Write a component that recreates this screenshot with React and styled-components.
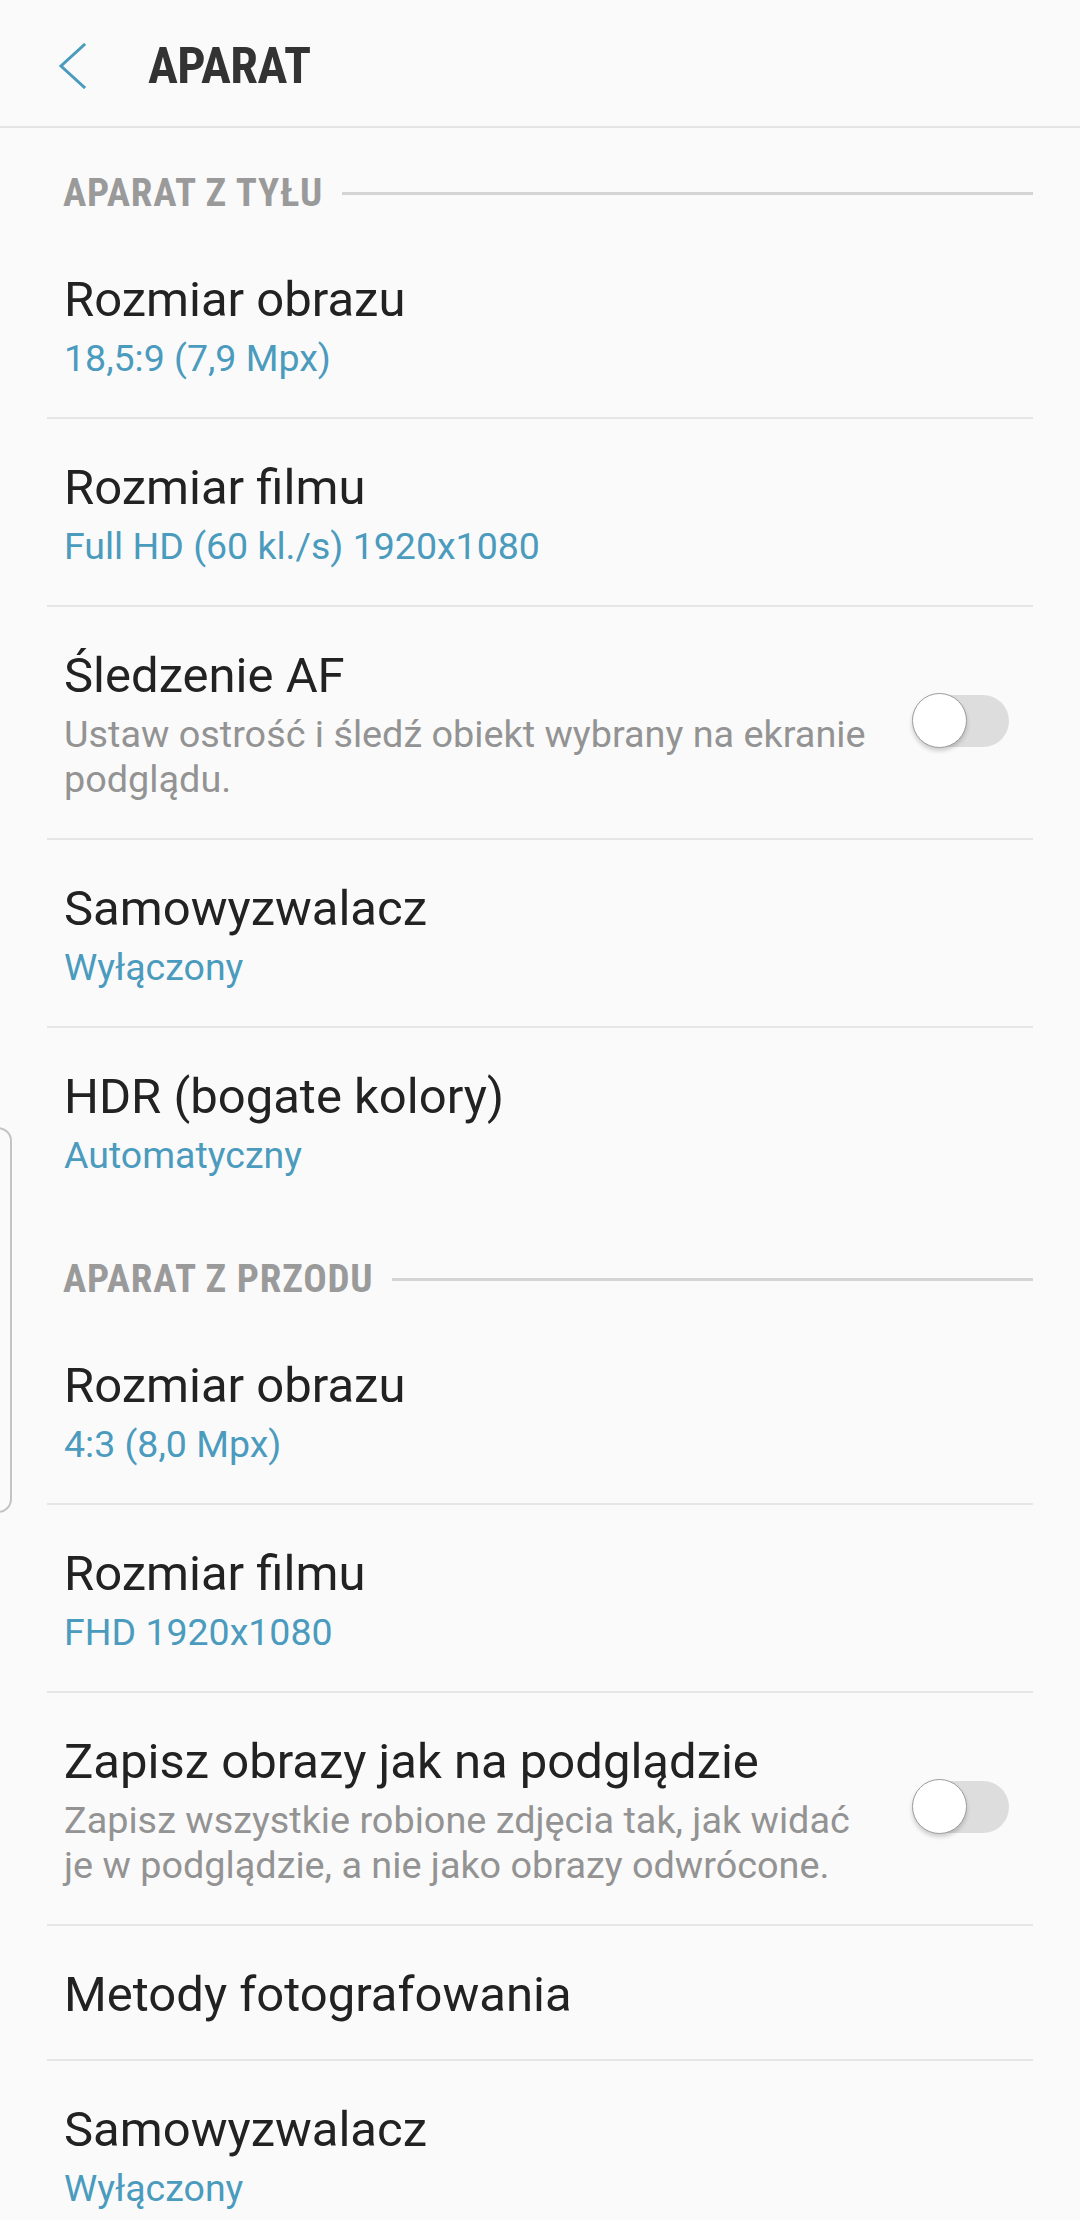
import styled, { createGlobalStyle } from "styled-components";

const GlobalStyle = createGlobalStyle`
  * { box-sizing: border-box; }
  html, body {
    margin: 0;
    padding: 0;
    overflow: hidden;
    background: #fafafa;
  }
  body {
    font-family: Roboto, "Noto Sans", sans-serif;
  }
`;

const condensed = `"Roboto Condensed", "DejaVu Sans Condensed", "Liberation Sans Narrow", Roboto, sans-serif`;

const sections = [
  {
    title: "APARAT Z TYŁU",
    items: [
      { title: "Rozmiar obrazu", value: "18,5:9 (7,9 Mpx)" },
      { title: "Rozmiar filmu", value: "Full HD (60 kl./s) 1920x1080" },
      {
        title: "Śledzenie AF",
        description: "Ustaw ostrość i śledź obiekt wybrany na ekranie podglądu.",
        toggle: true
      },
      { title: "Samowyzwalacz", value: "Wyłączony" },
      { title: "HDR (bogate kolory)", value: "Automatyczny" }
    ]
  },
  {
    title: "APARAT Z PRZODU",
    items: [
      { title: "Rozmiar obrazu", value: "4:3 (8,0 Mpx)" },
      { title: "Rozmiar filmu", value: "FHD 1920x1080" },
      {
        title: "Zapisz obrazy jak na podglądzie",
        description:
          "Zapisz wszystkie robione zdjęcia tak, jak widać je w podglądzie, a nie jako obrazy odwrócone.",
        toggle: true
      },
      { title: "Metody fotografowania" },
      { title: "Samowyzwalacz", value: "Wyłączony" }
    ]
  }
];

const BackIcon = () => (
  <svg width="30" height="46" viewBox="0 0 30 46" fill="none">
    <path d="M27 2 L4 23 L27 44" stroke="#4a9bbd" strokeWidth="3" strokeLinecap="square" />
  </svg>
);

const Switch = () => (
  <SwitchFrame>
    <SwitchTrack />
    <SwitchThumb />
  </SwitchFrame>
);

const SettingRow = ({ title, value, description, toggle }) => (
  <Row>
    <RowText>
      <RowTitle>{title}</RowTitle>
      {value && <RowValue>{value}</RowValue>}
      {description && <RowDescription>{description}</RowDescription>}
    </RowText>
    {toggle && <Switch />}
  </Row>
);

const App = () => {
  return (
    <Page>
      <GlobalStyle />
      <Header>
        <BackButton>
          <BackIcon />
        </BackButton>
        <HeaderTitle>APARAT</HeaderTitle>
      </Header>
      {sections.map((section) => (
        <section key={section.title}>
          <SectionHeader>
            <SectionTitle>{section.title}</SectionTitle>
            <SectionLine />
          </SectionHeader>
          <List>
            {section.items.map((item, i) => (
              <SettingRow key={i} {...item} />
            ))}
          </List>
        </section>
      ))}
      <EdgeHandle />
    </Page>
  );
};

const Page = styled.div`
  position: relative;
  width: 1080px;
  height: 2220px;
  overflow: hidden;
  background: #fafafa;
`;

const Header = styled.header`
  height: 128px;
  display: flex;
  align-items: center;
  padding-top: 6px;
  border-bottom: 2px solid #e4e4e4;
`;

const BackButton = styled.div`
  width: 30px;
  height: 46px;
  margin-left: 57px;
  display: flex;
`;

const HeaderTitle = styled.h1`
  margin: 0 0 0 61px;
  font-family: ${condensed};
  font-stretch: condensed;
  font-weight: 700;
  font-size: 50px;
  line-height: 56px;
  letter-spacing: -0.5px;
  color: #333333;
`;

const SectionHeader = styled.div`
  display: flex;
  align-items: center;
  gap: 19px;
  padding: 42px 47px 15px 63px;
`;

const SectionTitle = styled.h2`
  margin: 0;
  font-family: ${condensed};
  font-stretch: condensed;
  font-weight: 700;
  font-size: 39px;
  line-height: 46px;
  letter-spacing: 0.8px;
  color: #9a9a9a;
  white-space: nowrap;
`;

const SectionLine = styled.div`
  flex: 1;
  height: 3px;
  background: #d4d4d4;
`;

const List = styled.div`
  margin: 0 47px;
`;

const Row = styled.div`
  display: flex;
  align-items: center;
  padding: 41px 24px 36px 17px;

  & + & {
    border-top: 2px solid #e6e6e6;
  }
`;

const RowText = styled.div`
  flex: 1;
  min-width: 0;
  display: flex;
  flex-direction: column;
`;

const RowTitle = styled.div`
  font-size: 49px;
  line-height: 56px;
  color: #222222;
`;

const RowValue = styled.div`
  margin-top: 8px;
  font-size: 37.5px;
  line-height: 45px;
  color: #4a9bbd;
`;

const RowDescription = styled.div`
  margin-top: 8px;
  font-size: 37.8px;
  line-height: 45px;
  color: #939393;
`;

const SwitchFrame = styled.div`
  position: relative;
  flex-shrink: 0;
  width: 97px;
  height: 55px;
  margin: 0 0 10px 36px;
`;

const SwitchTrack = styled.div`
  position: absolute;
  left: 2px;
  right: 0;
  top: 2px;
  height: 52px;
  border-radius: 26px;
  background: #dddddd;
`;

const SwitchThumb = styled.div`
  position: absolute;
  left: 0;
  top: 0;
  width: 55px;
  height: 55px;
  border-radius: 50%;
  background: #ffffff;
  border: 1.5px solid #9c9c9c;
  box-shadow: 0 3px 4px rgba(0, 0, 0, 0.18);
`;

const EdgeHandle = styled.div`
  position: absolute;
  left: -20px;
  top: 1127px;
  width: 32px;
  height: 386px;
  border: 2px solid #c4c4c4;
  border-radius: 14px;
`;

export default App;
